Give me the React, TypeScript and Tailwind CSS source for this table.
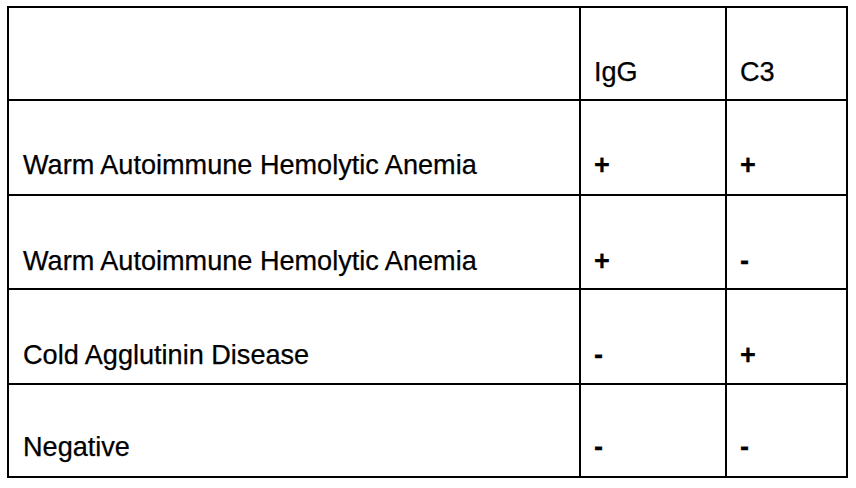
const rows = [
  { name: "", igg: "IgG", c3: "C3", h: "h-[93px]", pb: "pb-[12px]" },
  { name: "Warm Autoimmune Hemolytic Anemia", igg: "+", c3: "+", h: "h-[95px]", pb: "pb-[14px]" },
  { name: "Warm Autoimmune Hemolytic Anemia", igg: "+", c3: "-", h: "h-[94px]", pb: "pb-[12px]" },
  { name: "Cold Agglutinin Disease", igg: "-", c3: "+", h: "h-[95px]", pb: "pb-[13px]" },
  { name: "Negative", igg: "-", c3: "-", h: "h-[93px]", pb: "pb-[14px]" },
];

// header labels are plain; the +/- marks render heavier in the source
const markClass = (v: string) =>
  v === "+" || v === "-" ? "font-bold" : "";

export default function App() {
  return (
    <div className="w-[856px] h-[488px] bg-white pt-[6px] pl-[7px] font-['Liberation_Sans',Arial,sans-serif] text-black [-webkit-text-stroke:0.25px_black]">
      <div className="grid w-[841px] grid-cols-[572px_146px_121px] border-l-2 border-t-2 border-black">
        {rows.map((row, i) => (
          <div key={i} className="contents">
            <div className={`flex items-end border-b-2 border-r-2 border-black pl-[14px] ${row.h} ${row.pb}`}>
              <span className="text-[27.1px] leading-[31px]">{row.name}</span>
            </div>
            <div className={`flex items-end border-b-2 border-r-2 border-black pl-[13px] ${row.h} ${row.pb}`}>
              <span className={`text-[27.1px] leading-[31px] ${markClass(row.igg)}`}>{row.igg}</span>
            </div>
            <div className={`flex items-end border-b-2 border-r-2 border-black pl-[13px] ${row.h} ${row.pb}`}>
              <span className={`text-[27.1px] leading-[31px] ${markClass(row.c3)}`}>{row.c3}</span>
            </div>
          </div>
        ))}
      </div>
    </div>
  );
}
